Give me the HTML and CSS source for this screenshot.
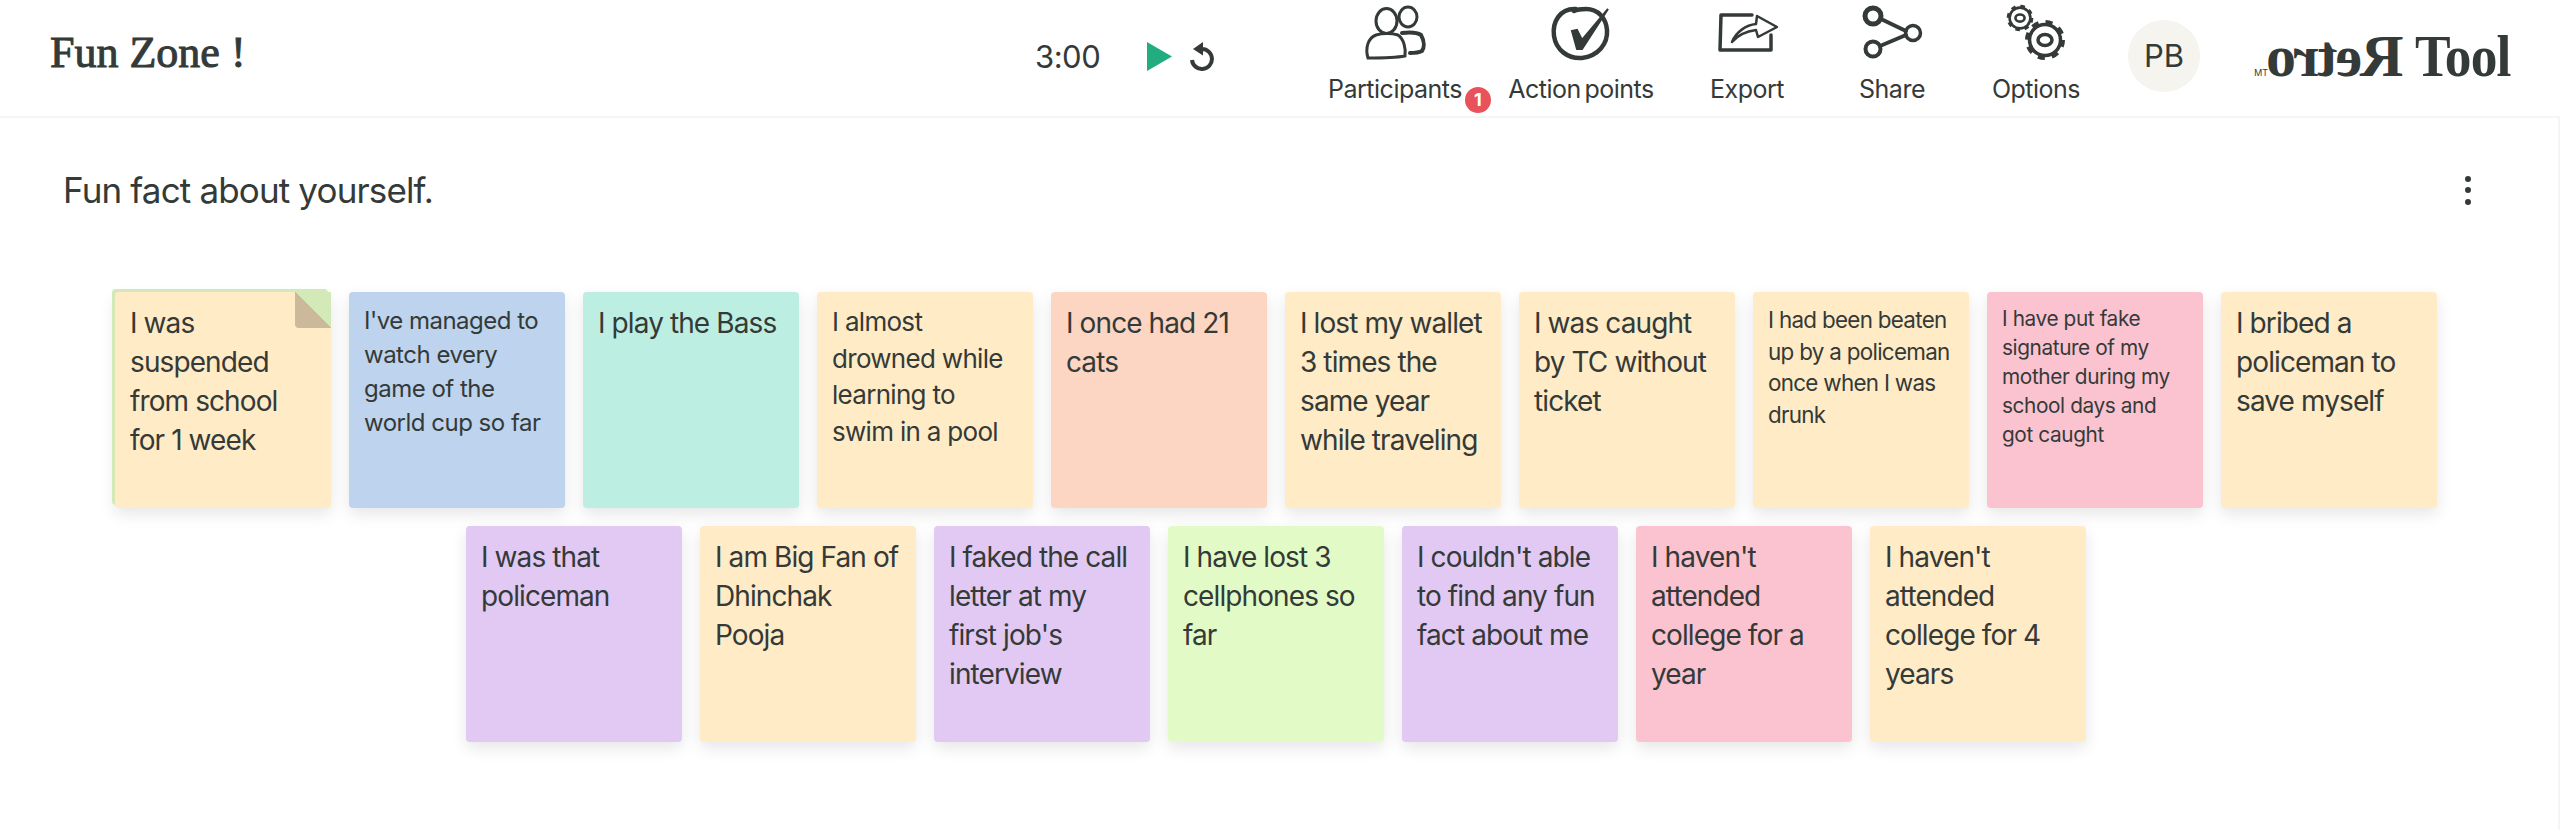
FILE: index.html
```html
<!DOCTYPE html>
<html lang="en">
<head>
    <meta charset="UTF-8">
    <title>Fun Zone !</title>
    <link rel="stylesheet" href="styles.css">
</head>
<body>

    <!-- top bar -->
    <header class="topbar">
        <div class="room-name">Fun Zone !</div>

        <div class="timer">
            <span class="timer-time">3:00</span>
            <svg class="timer-play" width="25" height="29" viewBox="0 0 25 29"><polygon points="0,0 25,14.5 0,29" fill="#21ad80"/></svg>
            <svg class="timer-reset" width="24" height="29" viewBox="0 0 24 29">
                <path d="M12 7 A10 10 0 1 1 2 18" fill="none" stroke="#343a38" stroke-width="4"/>
                <polygon points="13,0 3,7 13,13.5" fill="#343a38"/>
            </svg>
        </div>

        <nav class="nav">
            <a class="nav-item nav-item-wide" href="#">
                <svg class="nav-icon" viewBox="0 0 70 60" fill="none" stroke="#343a38" stroke-width="3" stroke-linecap="round">
                    <ellipse cx="26.5" cy="17" rx="10.5" ry="12.5"/>
                    <ellipse cx="48" cy="13" rx="9" ry="10"/>
                    <path d="M16 31 C22 29 32 29 38 31 C44 35 46 45 45 52 C34 54 20 54 8 54 C5 44 8 34 16 31 Z"/>
                    <path d="M42 29 C50 28 58 29 61 31 C65 38 64 44 62 47 C58 49 54 49 50 49" stroke-width="4"/>
                </svg>
                <span>Participants</span>
                <span class="badge">1</span>
            </a>
            <a class="nav-item nav-item-wide" href="#">
                <svg class="nav-icon" viewBox="0 0 70 60" fill="none" stroke="#343a38" stroke-linecap="round">
                    <path d="M30 5 C14 4 6 18 8 32 C10 46 22 55 36 54 C52 52 62 40 61 26 C60 14 52 5 40 5 C36 5 32 5 28 7" stroke-width="4.5"/>
                    <path d="M26 27 L31 26 L36 36 L62 5 L36 45 L31 45 Z" fill="#343a38" stroke-width="2"/>
                </svg>
                <span>Action points</span>
            </a>
            <a class="nav-item nav-item-export" href="#">
                <svg class="nav-icon" viewBox="0 0 70 60" fill="none" stroke="#343a38" stroke-linecap="round" stroke-linejoin="round">
                    <path d="M40 11 L9 11 L8 46 L59 46 L59 31" stroke-width="3.5"/>
                    <path d="M20 38 C24 28 34 21 44 20 L45 12 L65 23 L46 33 L44 26 C36 27 26 31 20 38 Z" fill="#fff" stroke-width="2.5"/>
                </svg>
                <span>Export</span>
            </a>
            <a class="nav-item" href="#">
                <svg class="nav-icon" viewBox="0 0 70 60" fill="none" stroke="#343a38" stroke-linecap="round">
                    <path d="M24 15 L49 27 M23 42 L49 31" stroke-width="4"/>
                    <circle cx="16" cy="12" r="8" stroke-width="5"/>
                    <circle cx="56" cy="29" r="7.5" stroke-width="3.5"/>
                    <circle cx="16" cy="45" r="7.5" stroke-width="4"/>
                </svg>
                <span>Share</span>
            </a>
            <a class="nav-item" href="#">
                <svg class="nav-icon" viewBox="0 0 70 60" fill="none" stroke="#343a38">
                    <g transform="translate(19 14) scale(.65)">
                        <circle r="16" stroke-width="4"/>
                        <circle r="18.5" stroke-width="4" stroke-dasharray="7 7.53"/>
                        <ellipse rx="7" ry="5.5" stroke-width="4"/>
                    </g>
                    <g transform="translate(44 36)">
                        <circle r="15.5" stroke-width="3.5"/>
                        <circle r="18" stroke-width="4" stroke-dasharray="7 7.14"/>
                        <ellipse rx="7" ry="5.5" stroke-width="3.5"/>
                    </g>
                </svg>
                <span>Options</span>
            </a>
        </nav>

        <div class="avatar">PB</div>

        <div class="logo">
            <span class="logo-tm">TM</span>
            <span class="logo-retro">Retro</span>
            <span class="logo-tool">Tool</span>
        </div>
    </header>

    <!-- board -->
    <main class="main">
        <div class="question">
            <h1>Fun fact about yourself.</h1>
            <div class="dots"><i></i><i></i><i></i></div>
        </div>

        <div class="board">
            <div class="note note-yellow note-top">
                <div class="note-fold"></div>
                I was suspended from school for 1 week
            </div>
            <div class="note note-blue note-md">I've managed to watch every game of the world cup so far</div>
            <div class="note note-teal">I play the Bass</div>
            <div class="note note-yellow note-lg">I almost drowned while learning to swim in a pool</div>
            <div class="note note-salmon">I once had 21 cats</div>
            <div class="note note-yellow">I lost my wallet 3 times the same year while traveling</div>
            <div class="note note-yellow">I was caught by TC without ticket</div>
            <div class="note note-yellow note-sm">I had been beaten up by a policeman once when I was drunk</div>
            <div class="note note-pink note-xs">I have put fake signature of my mother during my school days and got caught</div>
            <div class="note note-yellow">I bribed a policeman to save myself</div>

            <div class="note note-purple">I was that policeman</div>
            <div class="note note-yellow">I am Big Fan of Dhinchak Pooja</div>
            <div class="note note-purple">I faked the call letter at my first job's interview</div>
            <div class="note note-green">I have lost 3 cellphones so far</div>
            <div class="note note-purple">I couldn't able to find any fun fact about me</div>
            <div class="note note-pink">I haven't attended college for a year</div>
            <div class="note note-yellow">I haven't attended college for 4 years</div>
        </div>
    </main>

</body>
</html>
```

FILE: styles.css
```css
body {
    margin: 0;
    background-color: #fff;
    color: #343a38;
    font-family: Inter, "Noto Sans", sans-serif;
    overflow: hidden;
}

/* top bar */
.topbar {
    display: flex;
    align-items: flex-start;
    height: 116px;
    padding: 0 49px 0 50px;
    border-bottom: 2px solid #f5f5f3;
}

.room-name {
    flex: 1;
    margin-top: 29px;
    font-family: "Liberation Serif", serif;
    font-size: 44px;
    line-height: 48px;
    -webkit-text-stroke: 1px #343a38;
}

.timer {
    display: flex;
    align-items: center;
    height: 29px;
    margin-top: 42px;
    margin-right: 88px;
}

.timer-time {
    width: 65px;
    margin-right: 47px;
    font-size: 31px;
    letter-spacing: -0.5px;
}

.timer-reset {
    margin-left: 18px;
}

.nav {
    display: flex;
}

.nav-item {
    position: relative;
    display: flex;
    flex-direction: column;
    align-items: center;
    width: 144px;
    padding-top: 4px;
    color: #343a38;
    font-size: 25px;
    letter-spacing: -0.5px;
    word-spacing: -3px;
    line-height: 32px;
    text-decoration: none;
}

.nav-item-wide {
    width: 186px;
}

.nav-item-export {
    width: 146px;
}

.nav-icon {
    display: block;
    width: 70px;
    height: 60px;
    margin-bottom: 9px;
}

.badge {
    position: absolute;
    left: 163px;
    top: 87px;
    width: 26px;
    height: 26px;
    border-radius: 50%;
    background-color: #e8525a;
    color: #fff;
    font-size: 18px;
    font-weight: bold;
    letter-spacing: 0;
    line-height: 26px;
    text-align: center;
}

.avatar {
    width: 72px;
    height: 72px;
    margin-top: 20px;
    margin-left: 20px;
    margin-right: 56px;
    border-radius: 50%;
    background-color: #f5f4ef;
    font-size: 31px;
    line-height: 72px;
    text-align: center;
}

.logo {
    display: flex;
    align-items: baseline;
    width: 255px;
    margin-top: 22px;
    font-family: "Liberation Serif", serif;
    font-weight: bold;
    font-size: 60px;
    line-height: 68px;
}

.logo-tm {
    width: 12px;
    font-family: Inter, sans-serif;
    font-size: 9px;
    font-weight: normal;
    transform: scaleX(-1);
}

.logo-retro {
    margin-right: 11px;
    letter-spacing: -2px;
    white-space: nowrap;
    transform: scaleX(-1);
}

.logo-tool {
    white-space: nowrap;
    letter-spacing: -1px;
    transform: scaleX(0.89);
    transform-origin: left;
}

/* board */
.main {
    height: 712px;
    border-right: 2px solid #f5f5f3;
}

.question {
    display: flex;
    align-items: center;
    justify-content: space-between;
    height: 144px;
    padding: 0 87px 0 63px;
}

.question h1 {
    margin: 0;
    font-size: 35px;
    font-weight: normal;
    letter-spacing: -0.85px;
}

.dots {
    display: flex;
    flex-direction: column;
    gap: 5.5px;
}

.dots i {
    display: block;
    width: 6px;
    height: 6px;
    border-radius: 50%;
    background-color: #343a38;
}

.board {
    display: flex;
    flex-wrap: wrap;
    justify-content: center;
    gap: 18px;
    padding: 30px 6px 0 0;
}

/* notes */
.note {
    position: relative;
    box-sizing: border-box;
    width: 216px;
    height: 216px;
    padding: 12px 15px;
    border-radius: 4px;
    box-shadow: 0 6px 16px rgba(0, 0, 0, 0.1);
    font-size: 28px;
    letter-spacing: -0.9px;
    line-height: 39px;
}

.note-lg {
    font-size: 26px;
    line-height: 36.5px;
    letter-spacing: -0.7px;
}

.note-md {
    font-size: 24px;
    line-height: 34px;
    letter-spacing: -0.5px;
}

.note-sm {
    font-size: 22.4px;
    line-height: 31.5px;
    letter-spacing: -0.7px;
}

.note-xs {
    font-size: 20.8px;
    line-height: 29px;
    letter-spacing: -0.4px;
}

.note-yellow { background-color: #ffebc6; }
.note-blue { background-color: #bed3ed; }
.note-teal { background-color: #bcefe2; }
.note-salmon { background-color: #fdd5c3; }
.note-pink { background-color: #fbc3cf; }
.note-purple { background-color: #e2c9f4; }
.note-green { background-color: #e2fbc6; }

/* the first note has a second one lying under it */
.note-top {
    box-shadow: -3px -3px 0 #d3e9b8, 0 6px 16px rgba(0, 0, 0, 0.1);
}

.note-fold {
    position: absolute;
    right: 0;
    top: 0;
    width: 36px;
    height: 36px;
    border-bottom-left-radius: 4px;
    background: linear-gradient(45deg, #ccb89a 50%, #d3e9b8 50%);
}
```
